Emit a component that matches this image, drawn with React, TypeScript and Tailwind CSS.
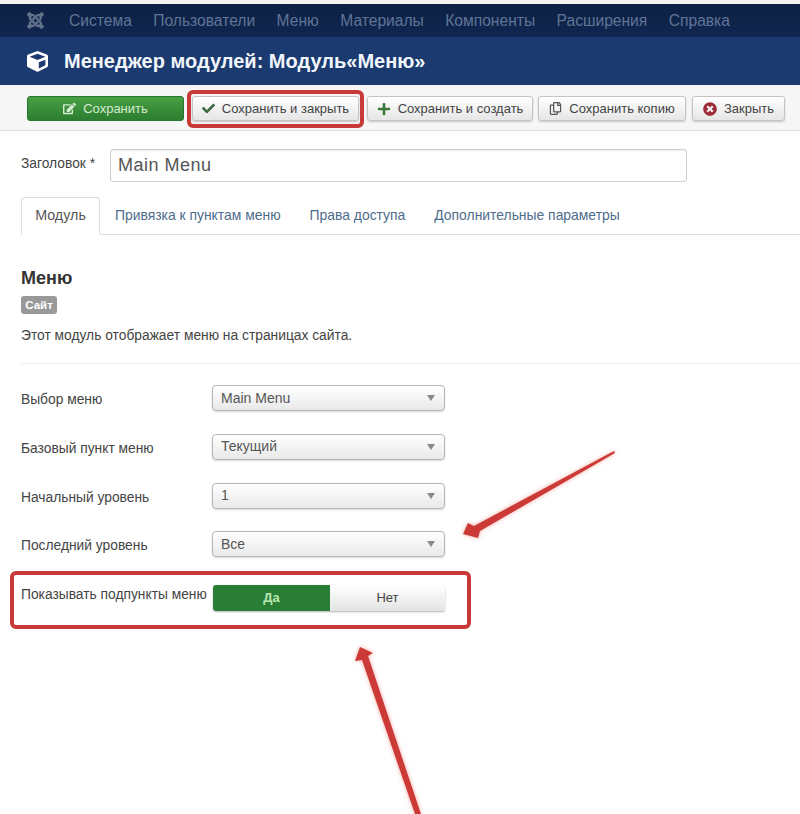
import { FaCheck, FaCube, FaJoomla, FaPlus, FaRegCopy, FaEdit, FaTimesCircle } from 'react-icons/fa'
import type { ReactNode } from 'react'

const NAV_ITEMS = ['Система', 'Пользователи', 'Меню', 'Материалы', 'Компоненты', 'Расширения', 'Справка']

const TABS = ['Привязка к пунктам меню', 'Права доступа', 'Дополнительные параметры']

const SELECTS = [
  { label: 'Выбор меню', value: 'Main Menu' },
  { label: 'Базовый пункт меню', value: 'Текущий' },
  { label: 'Начальный уровень', value: '1' },
  { label: 'Последний уровень', value: 'Все' },
]

function ToolButton({ icon, label, width }: { icon: ReactNode; label: string; width: string }) {
  return (
    <button className={`flex h-[25px] items-center justify-center gap-[7px] rounded-[3px] border border-[#c4c4c4] bg-gradient-to-b from-white to-[#e6e6e6] text-[13px] text-[#444] shadow-[0_1px_2px_rgba(0,0,0,0.2)] ${width}`}>
      {icon}
      {label}
    </button>
  )
}

function SelectRow({ label, value }: { label: string; value: string }) {
  return (
    <div className="flex h-[48.75px] items-start">
      <div className="w-[191px] pt-[6px] text-[13.8px] leading-[18px] text-[#444]">{label}</div>
      <div className="flex h-[26px] w-[233px] items-center justify-between rounded-[4px] border border-[#b5b5b5] bg-gradient-to-b from-white to-[#e9e9e9] pl-[8px] pr-[9px] text-[14px] text-[#555] shadow-[0_1px_2px_rgba(0,0,0,0.15)]">
        <span>{value}</span>
        <span className="h-0 w-0 border-x-[4px] border-t-[6px] border-x-transparent border-t-[#888]" />
      </div>
    </div>
  )
}

export default function App() {
  return (
    <div className="relative h-[814px] w-[800px] overflow-hidden bg-white font-['Liberation_Sans',Arial,sans-serif]">
      <div className="h-[4px] bg-[#f4f4f4]" />
      <nav className="flex h-[33px] items-center bg-gradient-to-b from-[#0e2145] to-[#10264f] pl-[26px] text-[15.6px] text-[#5f7596]">
        <FaJoomla className="mr-[24px] h-[19px] w-[19px] text-[#63738c]" />
        <div className="flex gap-[21.5px]">
          {NAV_ITEMS.map((item) => (
            <span key={item}>{item}</span>
          ))}
        </div>
      </nav>
      <header className="flex h-[48px] items-center bg-[#1a3a70] pl-[27px] text-white">
        <FaCube className="mr-[16px] h-[21px] w-[21px]" />
        <h1 className="text-[20px] font-bold leading-none text-[#f2f6fb]">Менеджер модулей: Модуль«Меню»</h1>
      </header>
      <div className="flex h-[46px] items-start border-b border-[#dfdfdf] bg-[#f6f6f6] pl-[27px] pt-[11px]">
        <button className="mr-[8px] flex h-[25px] w-[157px] items-center justify-center gap-[7px] rounded-[3px] border border-[#27752f] bg-gradient-to-b from-[#48a043] to-[#2c7d30] text-[13px] text-[#d5ecd3]">
          <FaEdit className="h-[13px] w-[13px]" />
          Сохранить
        </button>
        <div className="flex gap-[5px]">
          <ToolButton width="w-[167px] mr-[3px]" label="Сохранить и закрыть" icon={<FaCheck className="h-[13px] w-[13px] text-[#3f6b45]" />} />
          <ToolButton width="w-[166px]" label="Сохранить и создать" icon={<FaPlus className="h-[14px] w-[14px] text-[#3c7a3c]" />} />
          <ToolButton width="w-[148px]" label="Сохранить копию" icon={<FaRegCopy className="h-[13px] w-[13px] text-[#555]" />} />
          <ToolButton width="w-[93px] ml-px" label="Закрыть" icon={<FaTimesCircle className="h-[14px] w-[14px] text-[#9b2c35]" />} />
        </div>
      </div>

      <main className="pl-[21px]">
        <div className="flex items-start pt-[18px]">
          <label className="w-[89px] pt-[6px] text-[13.8px] leading-[18px] text-[#444]">Заголовок *</label>
          <div className="flex h-[33px] w-[577px] items-center rounded-[3px] border border-[#cfcfcf] pl-[7px] text-[18px] tracking-[0.5px] text-[#555] shadow-[inset_0_1px_1px_rgba(0,0,0,0.08)]">
            Main Menu
          </div>
        </div>

        <div className="mt-[15px] flex h-[38px] items-stretch border-b border-[#dddddd] text-[13.9px]">
          <div className="-mb-px flex w-[79px] items-center justify-center rounded-t-[4px] border border-b-white border-[#dddddd] bg-white text-[14.3px] text-[#555]">Модуль</div>
          <div className="flex gap-[29px] pl-[15px]">
            {TABS.map((tab) => (
              <span key={tab} className="flex items-center text-[#4d6c8c]">{tab}</span>
            ))}
          </div>
        </div>

        <h2 className="mt-[32px] text-[18px] font-bold leading-[22px] text-[#333]">Меню</h2>
        <span className="mt-[7px] block h-[18px] w-[36px] rounded-[3px] bg-[#999] text-center text-[11.5px] font-bold leading-[18px] text-white">Сайт</span>
        <p className="mt-[13px] text-[13.8px] leading-[18px] text-[#444]">Этот модуль отображает меню на страницах сайта.</p>
        <hr className="mt-[18px] border-[#eeeeee]" />

        <div className="mt-[21px]">
          {SELECTS.map((row) => (
            <SelectRow key={row.label} label={row.label} value={row.value} />
          ))}
        </div>

        <div className="mt-[5px] flex items-start">
          <div className="w-[192px] pt-[1px] text-[13.8px] leading-[18px] text-[#444] whitespace-nowrap">Показывать подпункты меню</div>
          <div className="flex h-[26px] w-[232px] overflow-hidden rounded-[3px] text-[13px] shadow-[0_1px_2px_rgba(0,0,0,0.3)]">
            <div className="flex w-[117px] items-center justify-center bg-[#2a7d35] font-bold text-[#b9e8b4]">Да</div>
            <div className="flex flex-1 items-center justify-center bg-gradient-to-b from-white to-[#e4e4e4] text-[#444]">Нет</div>
          </div>
        </div>
      </main>

      {/* красные пометки поверх скриншота */}
      <div className="absolute left-[187px] top-[90px] h-[38px] w-[177px] rounded-[6px] border-[4px] border-[#c73a38]" />
      <div className="absolute left-[10px] top-[571px] h-[58px] w-[461px] rounded-[6px] border-[4px] border-[#c73a38]" />
      <svg className="absolute left-0 top-0 drop-shadow-[0_0_2px_rgba(230,80,70,0.5)]" width="800" height="814" viewBox="0 0 800 814" fill="#cb3a36">
        <polygon points="614,451 615,453 480,531 478,538 463,534 468,523 474,526" />
        <polygon points="360,647 373,653 368,656 421,814 415,814 362,660 355,661" />
      </svg>
    </div>
  )
}
